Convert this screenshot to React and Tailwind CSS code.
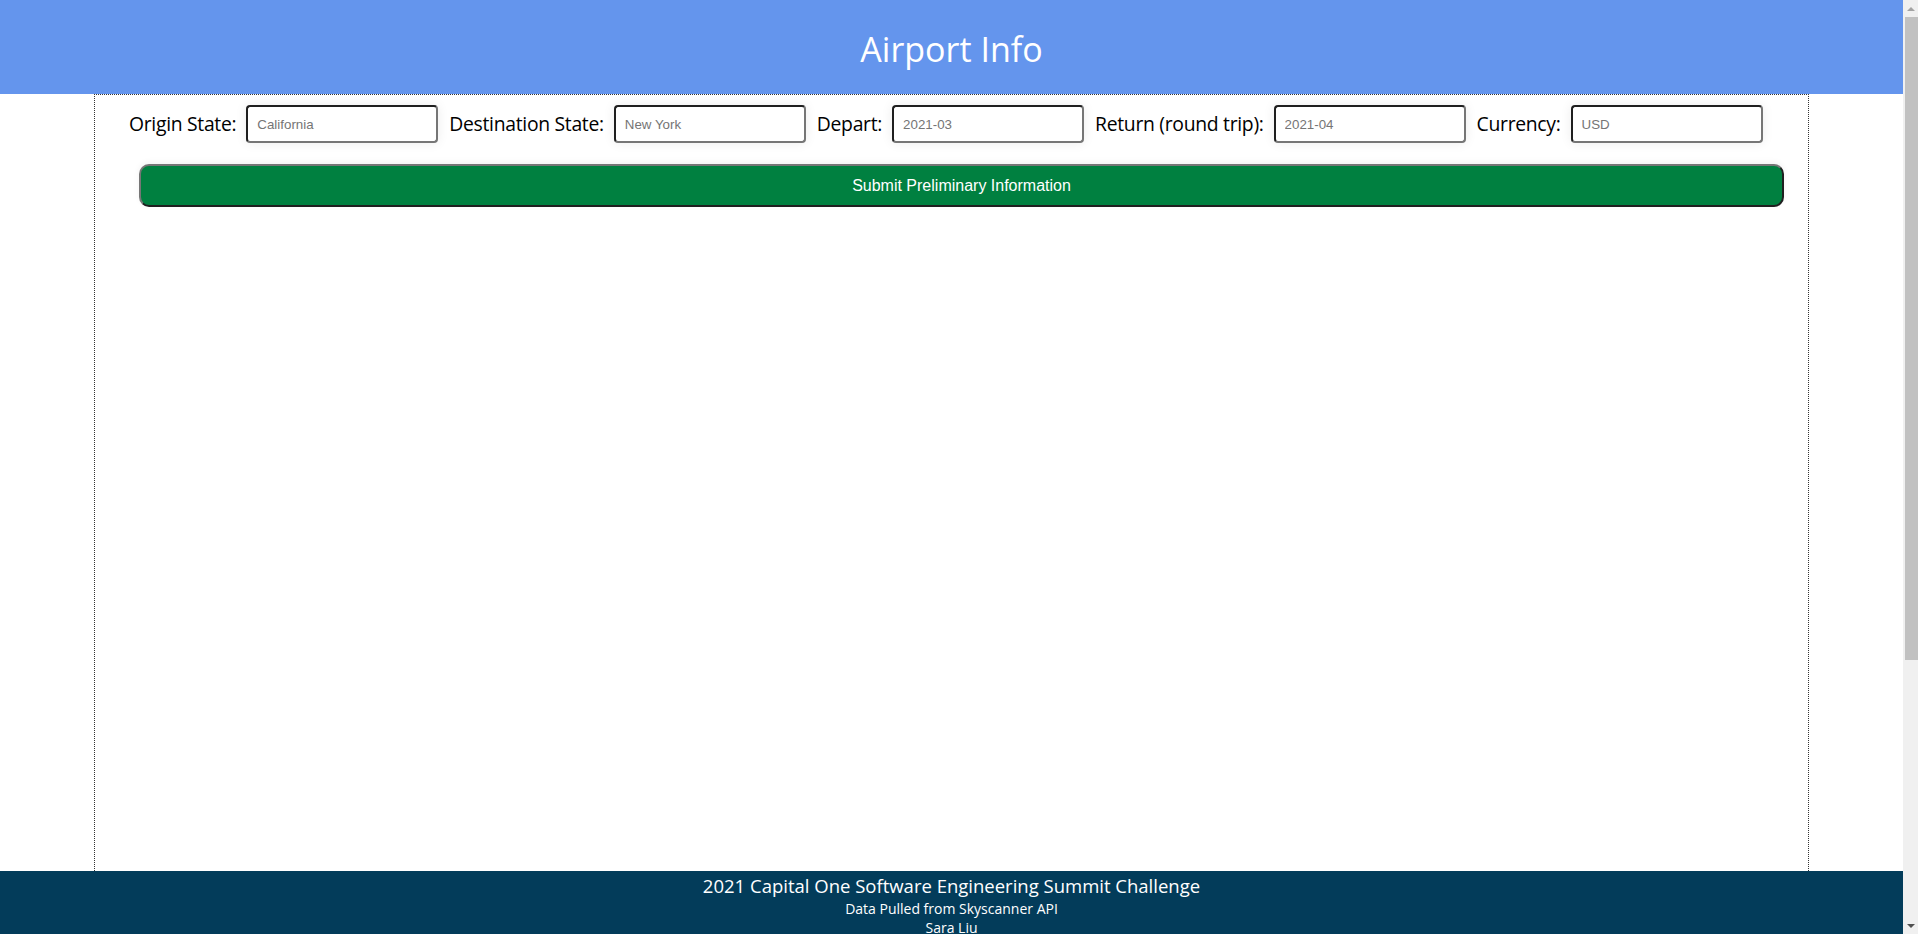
import { useState } from 'react';

const fields = [
  { label: 'Origin State:', placeholder: 'California' },
  { label: 'Destination State:', placeholder: 'New York' },
  { label: 'Depart:', placeholder: '2021-03' },
  { label: 'Return (round trip):', placeholder: '2021-04' },
  { label: 'Currency:', placeholder: 'USD' },
];

export default function App() {
  const [values, setValues] = useState({});

  return (
    <div className="flex h-screen overflow-hidden bg-white font-['Open_Sans',sans-serif]">
      <div className="w-[1903px] shrink-0">
        {/* Header */}
        <header className="h-[94px] bg-[#6495ED] flex justify-center pt-[27px]">
          <h1 className="text-white text-[34px] leading-[44px]">Airport Info</h1>
        </header>

        {/* Main box */}
        <main className="w-[1715px] mx-auto h-[777px] border border-dotted border-[#333] border-b-0">
          <div className="flex items-center pl-[34px] pt-[10px]">
            {fields.map((f, i) => (
              <div key={f.label} className={`flex items-center ${i > 0 ? 'ml-[11px]' : ''}`}>
                <label className="text-[19.35px] text-black mr-[10px] tracking-[-0.3px]">{f.label}</label>
                <input
                  type="text"
                  placeholder={f.placeholder}
                  value={values[f.label] || ''}
                  onChange={(e) => setValues({ ...values, [f.label]: e.target.value })}
                  className="w-[192px] h-[38px] pl-[9px] rounded-[4px] border-2 border-t-[#1f1f1f] border-l-[#1f1f1f] border-r-[#767676] border-b-[#767676] bg-white shadow-[0_0_12px_rgba(0,0,0,0.08)] font-['Liberation_Sans',Arial,sans-serif] text-[13.33px] placeholder:text-[#757575] outline-none"
                />
              </div>
            ))}
          </div>
          <div className="pl-[44px] pr-[24px] pt-[21px]">
            <button className="w-full h-[43px] rounded-[10px] bg-[#008040] border-2 border-t-[#767676] border-l-[#767676] border-r-[#1f1f1f] border-b-[#1f1f1f] text-white text-[16px] font-['Liberation_Sans',Arial,sans-serif] shadow-[0_-2px_6px_rgba(0,0,0,0.05)]">
              Submit Preliminary Information
            </button>
          </div>
        </main>

        {/* Footer */}
        <footer className="bg-[#033c5a] text-white text-center pt-[2px] pb-[370px]">
          <p className="text-[18.5px] leading-[26px]">2021 Capital One Software Engineering Summit Challenge</p>
          <p className="text-[14px] leading-[19px]">Data Pulled from Skyscanner API</p>
          <p className="text-[14px] leading-[19px]">Sara Liu</p>
        </footer>
      </div>

      {/* Scrollbar */}
      <div className="w-[15px] shrink-0 bg-[#f0f0f0] flex flex-col">
        <div className="h-[17px] flex items-center justify-center">
          <div className="w-0 h-0 border-l-[4px] border-r-[4px] border-b-[4px] border-l-transparent border-r-transparent border-b-[#a3a3a3]" />
        </div>
        <div className="h-[643px] ml-[2px] bg-[#c1c1c1]" />
        <div className="flex-1" />
        <div className="h-[17px] flex items-center justify-center">
          <div className="w-0 h-0 border-l-[4px] border-r-[4px] border-t-[4px] border-l-transparent border-r-transparent border-t-[#505050]" />
        </div>
      </div>
    </div>
  );
}
